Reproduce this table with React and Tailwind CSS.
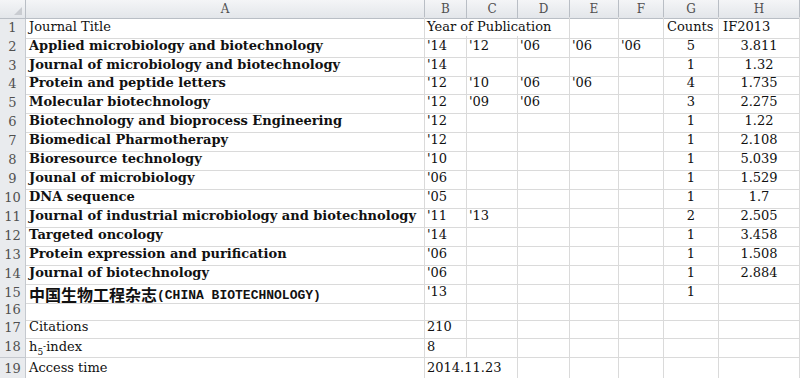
import React from "react";

const cols = "grid grid-cols-[26px_399px_42px_51px_52px_49px_45px_55px_81px]";
const serif = { fontFamily: '"DejaVu Serif", "Liberation Serif", serif' };

const rows = [
  { t: "Applied microbiology and biotechnology", y: ["'14", "'12", "'06", "'06", "'06"], c: "5", f: "3.811" },
  { t: "Journal of microbiology and biotechnology", y: ["'14"], c: "1", f: "1.32" },
  { t: "Protein and peptide letters", y: ["'12", "'10", "'06", "'06"], c: "4", f: "1.735" },
  { t: "Molecular biotechnology", y: ["'12", "'09", "'06"], c: "3", f: "2.275" },
  { t: "Biotechnology and bioprocess Engineering", y: ["'12"], c: "1", f: "1.22" },
  { t: "Biomedical Pharmotherapy", y: ["'12"], c: "1", f: "2.108" },
  { t: "Bioresource technology", y: ["'10"], c: "1", f: "5.039" },
  { t: "Jounal of microbiology", y: ["'06"], c: "1", f: "1.529" },
  { t: "DNA sequence", y: ["'05"], c: "1", f: "1.7" },
  { t: "Journal of industrial microbiology and biotechnology", y: ["'11", "'13"], c: "2", f: "2.505" },
  { t: "Targeted oncology", y: ["'14"], c: "1", f: "3.458" },
  { t: "Protein expression and purification", y: ["'06"], c: "1", f: "1.508" },
  { t: "Journal of biotechnology", y: ["'06"], c: "1", f: "2.884" },
];

// heights of rows 1..19
const heights = ["h-[19px]", "h-[19px]", "h-[18px]", "h-[19px]", "h-[19px]", "h-[19px]", "h-[19px]", "h-[19px]", "h-[19px]", "h-[19px]", "h-[19px]", "h-[19px]", "h-[19px]", "h-[19px]", "h-[18px]", "h-[17px]", "h-[19px]", "h-[22px]", "h-[19px]"];

function RowNum({ n }) {
  return (
    <div className="flex items-center justify-center border-r border-b border-[#c5c9cf] bg-[#e9ebee] text-[13px] text-[#505050]">
      {n}
    </div>
  );
}

function Cell({ children, className = "" }) {
  return (
    <div className={"flex items-end pb-[1px] whitespace-nowrap border-r border-b border-[#dadada] text-[13px] text-[#111] " + className}>
      {children}
    </div>
  );
}

function Row({ n, children }) {
  return (
    <div className={cols + " " + heights[n - 1]} style={serif}>
      <RowNum n={n} />
      {children}
    </div>
  );
}

function DataRow({ n, title, years, count, iff }) {
  const y = [0, 1, 2, 3, 4].map(i => years[i] || "");
  return (
    <Row n={n}>
      <Cell className="pl-[3px] font-bold">{title}</Cell>
      {y.map((v, i) => (
        <Cell key={i} className="pl-[2px]">{v}</Cell>
      ))}
      <Cell className="justify-center">{count}</Cell>
      <Cell className="justify-center">{iff}</Cell>
    </Row>
  );
}

export default function App() {
  const letters = ["A", "B", "C", "D", "E", "F", "G", "H"];
  return (
    <div className="w-[800px] h-[378px] overflow-hidden bg-white">
      <div className={cols + " h-[17px]"} style={serif}>
        <div className="relative border-r border-b border-[#b9bec5] bg-gradient-to-b from-[#f4f5f7] to-[#e3e6ea]">
          <svg className="absolute right-[3px] bottom-[3px]" width="8" height="8" viewBox="0 0 8 8">
            <polygon points="8,0 8,8 0,8" fill="#c9ccd1" />
          </svg>
        </div>
        {letters.map(l => (
          <div key={l} className="flex items-center justify-center border-r border-b border-[#b9bec5] bg-gradient-to-b from-[#f4f5f7] to-[#e3e6ea] text-[12px] text-[#505050]">
            {l}
          </div>
        ))}
      </div>

      <Row n={1}>
        <Cell className="pl-[3px]">Journal Title</Cell>
        <Cell className="col-span-3 pl-[2px]">Year of Publication</Cell>
        <Cell />
        <Cell />
        <Cell className="pl-[3px]">Counts</Cell>
        <Cell className="pl-[4px]">IF2013</Cell>
      </Row>

      {rows.map((r, i) => (
        <DataRow key={i} n={i + 2} title={r.t} years={r.y} count={r.c} iff={r.f} />
      ))}

      <Row n={15}>
        <Cell className="pl-[3px] font-bold">
          <span style={{ fontFamily: '"Noto Sans CJK SC", sans-serif' }} className="text-[16px] leading-none">中国生物工程杂志</span>
          <span style={{ fontFamily: '"Liberation Mono", "Noto Sans CJK SC", monospace' }} className="text-[13px] leading-none">(CHINA BIOTECHNOLOGY)</span>
        </Cell>
        <Cell className="pl-[2px]">'13</Cell>
        <Cell />
        <Cell />
        <Cell />
        <Cell />
        <Cell className="justify-center">1</Cell>
        <Cell />
      </Row>

      <Row n={16}>
        {letters.map(l => <Cell key={l} />)}
      </Row>

      <Row n={17}>
        <Cell className="pl-[3px]">Citations</Cell>
        <Cell className="pl-[2px]">210</Cell>
        {letters.slice(2).map(l => <Cell key={l} />)}
      </Row>

      <Row n={18}>
        <Cell className="pl-[3px]">
          h<span className="text-[9px] relative top-[3px]">5</span>
          <span className="text-[9px] relative -top-[3px]">-</span>index
        </Cell>
        <Cell className="pl-[2px]">8</Cell>
        {letters.slice(2).map(l => <Cell key={l} />)}
      </Row>

      <Row n={19}>
        <Cell className="pl-[3px]">Access time</Cell>
        <Cell className="col-span-2 pl-[2px]">2014.11.23</Cell>
        {letters.slice(3).map(l => <Cell key={l} />)}
      </Row>
    </div>
  );
}
